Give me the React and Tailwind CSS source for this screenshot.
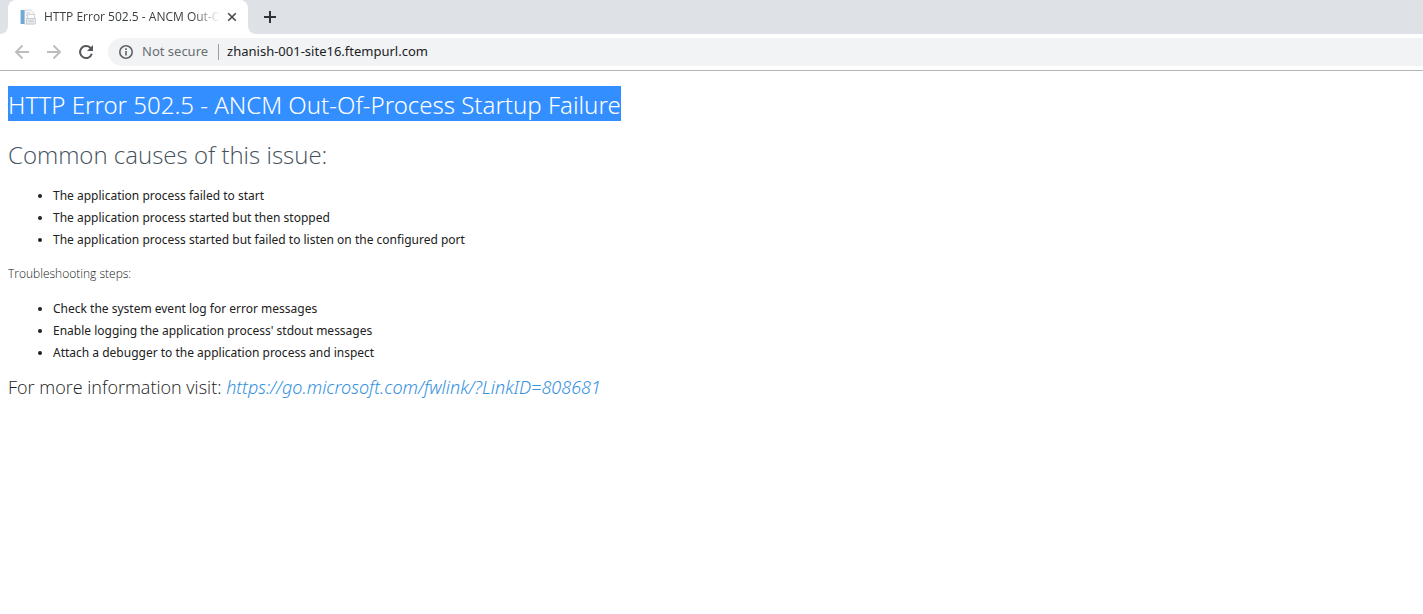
import React from "react";

const causes = [
  "The application process failed to start",
  "The application process started but then stopped",
  "The application process started but failed to listen on the configured port",
];

const steps = [
  "Check the system event log for error messages",
  "Enable logging the application process' stdout messages",
  "Attach a debugger to the application process and inspect",
];

function PageIcon() {
  return (
    <svg viewBox="0 0 16 16" className="h-4 w-4 shrink-0" aria-hidden="true">
      <path d="M4 1h7l3 3v11H4z" fill="#f4f6f7" stroke="#d3d7db" strokeWidth="0.8" />
      <path d="M1 1h3.500v14H1z" fill="#6fa9d6" />
      <path d="M0.500 1v14" stroke="#c5dcee" />
      <path d="M6 4h4M6 6.500h2" stroke="#cfd4d9" />
      <path d="M7.500 5.500h7v4h-7z" fill="#fafbfb" stroke="#c6cbd1" strokeWidth="0.8" />
      <path d="M6.500 9.500h9v5.500h-9z" fill="#e6e9ec" stroke="#c3c8ce" strokeWidth="0.8" />
      <path d="M8.500 12h5" stroke="#b9c0c7" />
    </svg>
  );
}

function TabStrip() {
  return (
    <div className="flex h-[34px] bg-[#dee1e6]">
      <div className="w-2 bg-white">
        <div className="h-full rounded-br-lg bg-[#dee1e6]" />
      </div>
      <div className="flex w-60 items-center rounded-t-lg bg-white pr-2 pl-3">
        <PageIcon />
        <span className="ml-2 flex-1 overflow-hidden font-['Open_Sans','Noto_Sans',sans-serif] text-xs whitespace-nowrap text-[#3c4043] [mask-image:linear-gradient(to_right,black_85%,transparent)]">
          HTTP Error 502.5 - ANCM Out-Of-Process Startup Failure
        </span>
        <button type="button" aria-label="Close tab" className="ml-1 flex h-4 w-4 items-center justify-center">
          <svg viewBox="0 0 16 16" className="h-4 w-4" fill="none" stroke="#45494d" strokeWidth="1.6">
            <path d="M4.200 4.200l7.600 7.600M11.800 4.200l-7.600 7.600" />
          </svg>
        </button>
      </div>
      <div className="flex-1 bg-white">
        <div className="flex h-full items-center rounded-bl-lg bg-[#dee1e6] pl-3">
          <button type="button" aria-label="New tab" className="h-5 w-5">
            <svg viewBox="0 0 20 20" className="h-5 w-5" fill="none" stroke="#2f3337" strokeWidth="2">
              <path d="M10 4v12M4 10h12" />
            </svg>
          </button>
        </div>
      </div>
    </div>
  );
}

function Toolbar() {
  return (
    <div className="flex h-[37px] items-center border-b border-[#b3b4b6] pl-3">
      <div className="flex gap-3">
        <button type="button" aria-label="Back" className="h-5 w-5">
          <svg viewBox="0 0 20 20" className="h-5 w-5" fill="none" stroke="#babcbe" strokeWidth="1.8">
            <path d="M17 10H4M10.500 3.500L4 10l6.500 6.500" />
          </svg>
        </button>
        <button type="button" aria-label="Forward" className="h-5 w-5">
          <svg viewBox="0 0 20 20" className="h-5 w-5" fill="none" stroke="#babcbe" strokeWidth="1.8">
            <path d="M3 10h13M9.500 3.500L16 10l-6.500 6.500" />
          </svg>
        </button>
        <button type="button" aria-label="Reload" className="h-5 w-5">
          <svg viewBox="0 0 20 20" className="h-5 w-5" fill="none" stroke="#54575b" strokeWidth="2">
            <path d="M15.800 11.800A6 6 0 1 1 14.300 5.800L16 7.500" />
            <path d="M17 3v6h-6z" fill="#54575b" stroke="none" />
          </svg>
        </button>
      </div>
      <div className="ml-3 flex h-7 flex-1 items-center rounded-l-full bg-[#f1f3f4] pl-2 text-[13px]">
        <svg viewBox="0 0 20 20" className="h-5 w-5" fill="none" stroke="#5f6368" strokeWidth="1.6" aria-hidden="true">
          <circle cx="10" cy="10" r="6.200" />
          <path d="M10 9v4.500M10 6.300v1.700" />
        </svg>
        <span className="ml-1.5 text-[#6a6e73]">Not secure</span>
        <span className="mr-2 ml-2.5 h-4 w-px bg-[#9a9da1]" />
        <input
          type="text"
          aria-label="Address"
          defaultValue="zhanish-001-site16.ftempurl.com"
          className="min-w-0 flex-1 bg-transparent text-[#202124] outline-none"
        />
      </div>
    </div>
  );
}

function BulletList({ items }) {
  return (
    <ul className="list-disc pl-[45px] text-xs leading-[22px]">
      {items.map((item) => (
        <li key={item}>{item}</li>
      ))}
    </ul>
  );
}

export default function App() {
  return (
    <div className="min-h-screen bg-white font-['Noto_Sans','Open_Sans',sans-serif] text-[#212121]">
      <header>
        <TabStrip />
        <Toolbar />
      </header>
      <main className="px-2 pt-[15px]">
        <h1 className="flex text-2xl font-light">
          <span className="bg-[#338fff] pt-0.5 leading-[33px] text-white">
            HTTP Error 502.5 - ANCM Out-Of-Process Startup Failure
          </span>
        </h1>
        <h2 className="mt-4 font-['Open_Sans','Noto_Sans',sans-serif] text-2xl leading-[35px] font-light text-[#44525e]">
          Common causes of this issue:
        </h2>
        <div className="mt-[13px]">
          <BulletList items={causes} />
        </div>
        <h3 className="mt-3 mb-[13px] font-['Open_Sans','Noto_Sans',sans-serif] text-xs leading-[22px] font-light">
          Troubleshooting steps:
        </h3>
        <BulletList items={steps} />
        <p className="mt-[9px] font-['Open_Sans','Noto_Sans',sans-serif] text-lg leading-7 font-light">
          For more information visit:{" "}
          <a
            href="https://go.microsoft.com/fwlink/?LinkID=808681"
            className="font-['Noto_Sans','Open_Sans',sans-serif] text-[#3391e0] italic"
          >
            https://go.microsoft.com/fwlink/?LinkID=808681
          </a>
        </p>
      </main>
    </div>
  );
}
